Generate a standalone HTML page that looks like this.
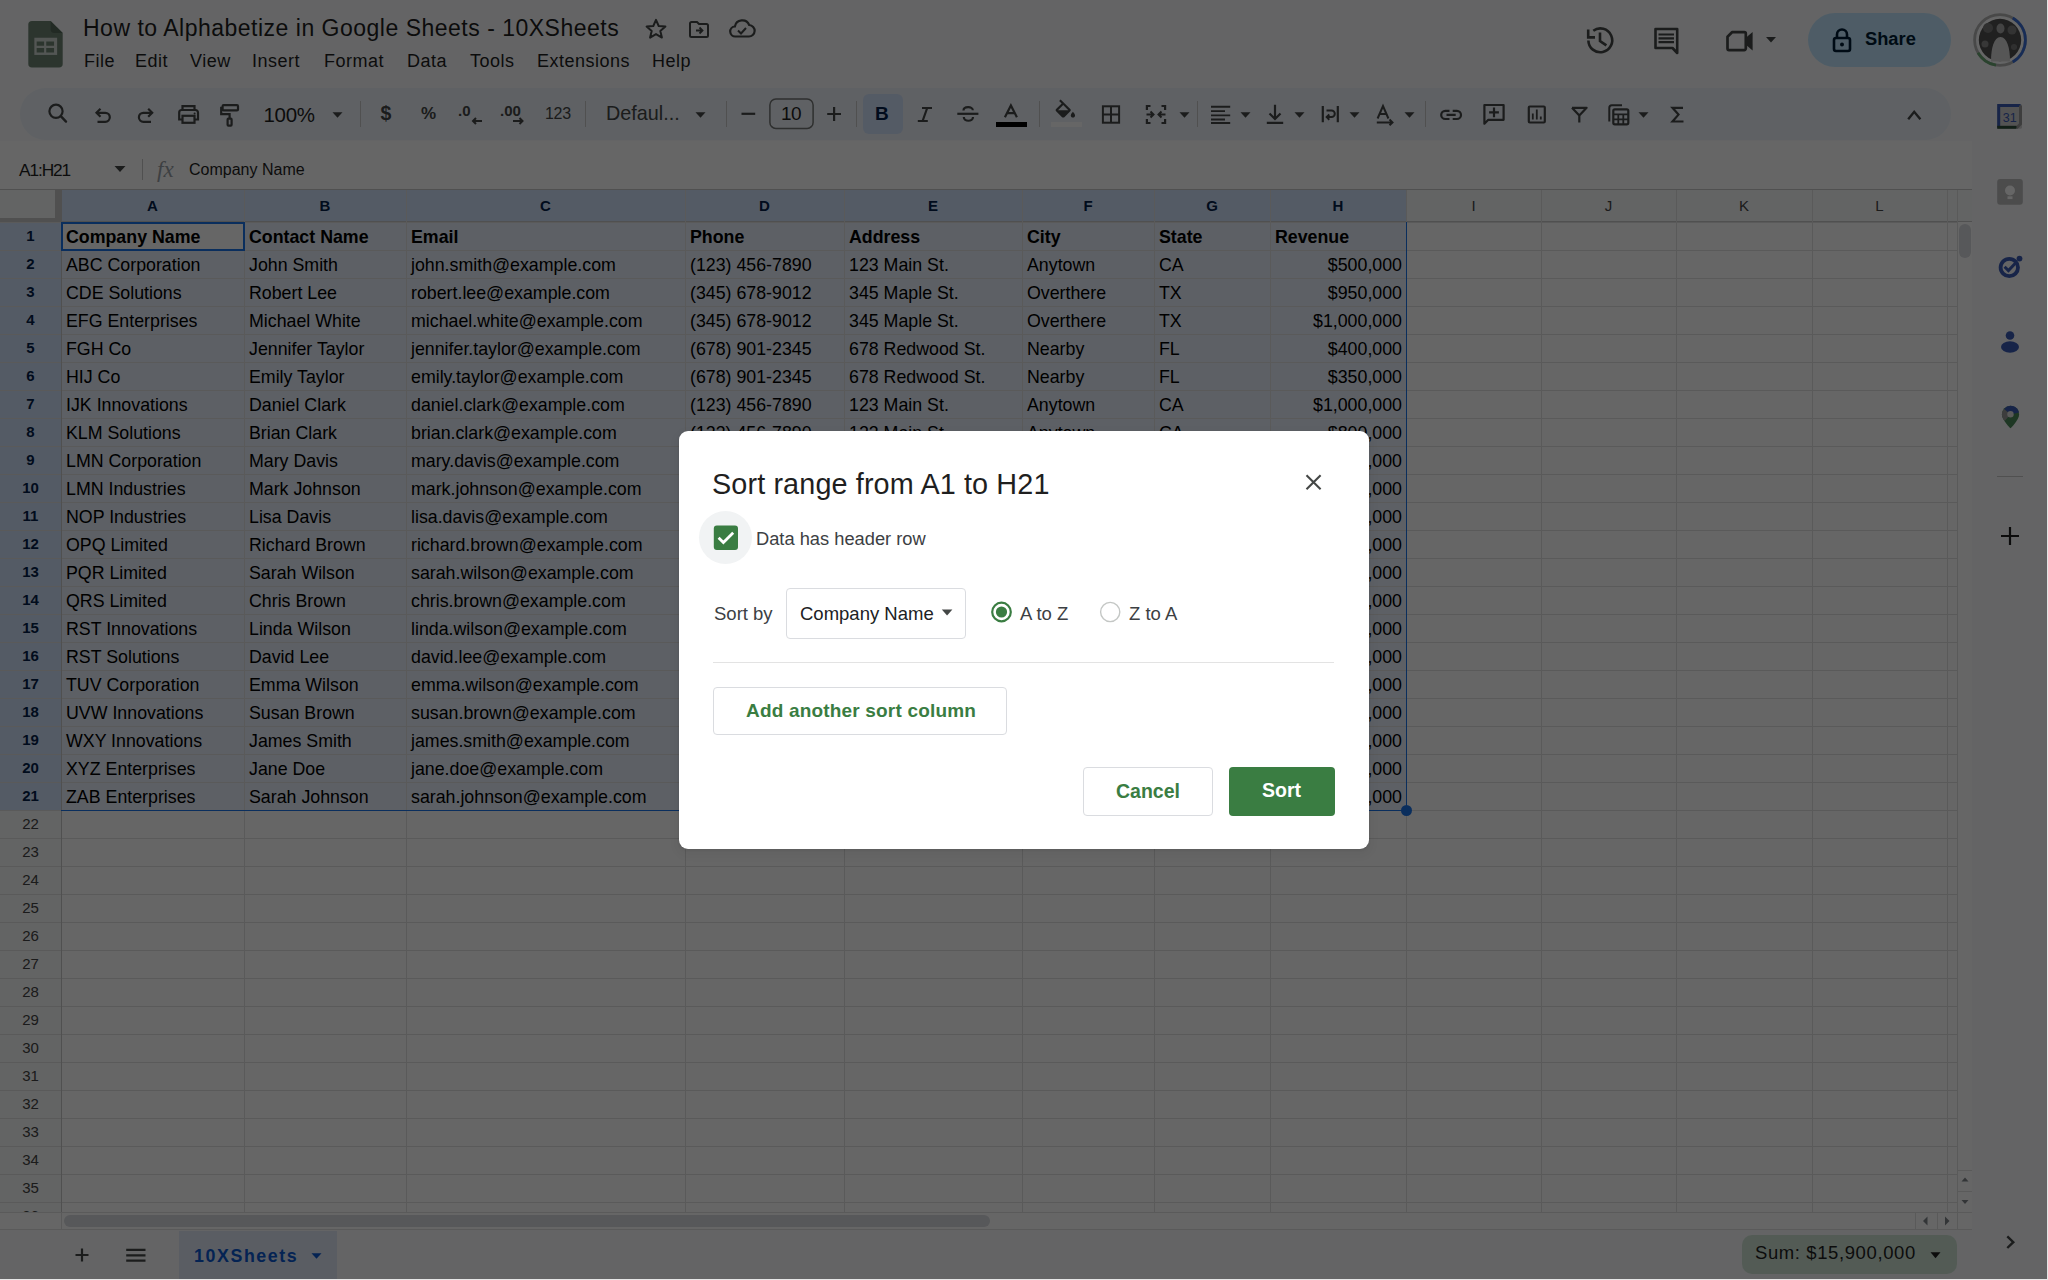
<!DOCTYPE html>
<html><head><meta charset="utf-8"><title>Sheets</title>
<style>
*{box-sizing:border-box}
html,body{margin:0;padding:0}
body{width:2048px;height:1280px;position:relative;overflow:hidden;background:#f9fbfd;font-family:"Liberation Sans",sans-serif;color:#1f1f1f}
.a{position:absolute}
.t{position:absolute;white-space:nowrap;line-height:1}
.cell{position:absolute;white-space:nowrap;font-size:17.8px;line-height:28px;color:#000;overflow:visible}
.rh{position:absolute;left:0;width:61px;text-align:center;font-size:15px;line-height:28px;color:#444}
.ch{position:absolute;text-align:center;font-size:15px;line-height:31px;color:#444;top:190px}
.vl{position:absolute;width:1px;background:#e1e1e1}
.hl{position:absolute;height:1px;background:#e1e1e1}
.ic{position:absolute}
.menu{position:absolute;top:51px;font-size:18px;line-height:20px;letter-spacing:0.5px;color:#1f1f1f}
</style></head><body>

<div class="a" style="left:1972px;top:0;width:76px;height:1280px;background:#f9fbfd"></div>
<svg class="a" style="left:28.3px;top:21px" width="35" height="46.5" viewBox="0 0 37 50">
<path d="M4 0h20l13 13v33a4 4 0 0 1-4 4H4a4 4 0 0 1-4-4V4a4 4 0 0 1 4-4z" fill="#6f8574"/>
<path d="M24 0l13 13H28a4 4 0 0 1-4-4z" fill="#566a5b"/>
<path d="M6.5 18h24.5v18.5H6.5z" fill="#d0d6d2"/>
<path d="M9 22h8v4.6H9zM19.3 22h8.4v4.6h-8.4zM9 29h8v4.8H9zM19.3 29h8.4v4.8h-8.4z" fill="#6f8574"/>
</svg>
<div class="t" style="left:83px;top:17px;font-size:23px;letter-spacing:0.5px;color:#1f1f1f">How to Alphabetize in Google Sheets - 10XSheets</div>
<svg class="a" style="left:644px;top:17px" width="24" height="24" viewBox="0 0 24 24"><path d="M12 2.8l2.7 6.2 6.7.6-5.1 4.4 1.6 6.6L12 17.1l-5.9 3.5 1.6-6.6L2.6 9.6l6.7-.6z" fill="none" stroke="#444746" stroke-width="2" stroke-linejoin="round"/></svg>
<svg class="a" style="left:687px;top:17px" width="24" height="24" viewBox="0 0 24 24"><path d="M3 6.5a1.5 1.5 0 0 1 1.5-1.5H10l2 2h7.5A1.5 1.5 0 0 1 21 8.5v10a1.5 1.5 0 0 1-1.5 1.5h-15A1.5 1.5 0 0 1 3 18.5z" fill="none" stroke="#444746" stroke-width="2"/><path d="M9 13.5h6M12.5 10.5l3 3-3 3" fill="none" stroke="#444746" stroke-width="1.8"/></svg>
<svg class="a" style="left:728px;top:16px" width="28" height="26" viewBox="0 0 28 26"><path d="M7.5 20.5a5 5 0 0 1-.6-10A7.5 7.5 0 0 1 21.2 9a5.6 5.6 0 0 1-.6 11.5z" fill="none" stroke="#444746" stroke-width="2.2"/><path d="M10 14.5l3 3 5-5.5" fill="none" stroke="#444746" stroke-width="2"/></svg>
<div class="menu" style="left:84px">File</div>
<div class="menu" style="left:135px">Edit</div>
<div class="menu" style="left:190px">View</div>
<div class="menu" style="left:252px">Insert</div>
<div class="menu" style="left:324px">Format</div>
<div class="menu" style="left:407px">Data</div>
<div class="menu" style="left:470px">Tools</div>
<div class="menu" style="left:537px">Extensions</div>
<div class="menu" style="left:652px">Help</div>
<svg class="a" style="left:1582px;top:22px" width="36" height="36" viewBox="1582 22 36 36" fill="none" stroke="#444746" stroke-width="2.6"><path d="M1588.4 40.4A11.9 11.9 0 1 0 1593.3 30.7"/><path d="M1588.2 29.6V37.4H1595"/><path d="M1600 32.6V41L1606.4 45.4"/></svg>
<svg class="a" style="left:1650px;top:24px" width="32" height="32" viewBox="1650 24 32 32" fill="none" stroke="#444746" stroke-width="2.6"><path d="M1655.5 29H1677.2V53L1672.5 48H1655.5z" stroke-linejoin="round"/><path d="M1658.5 34.5H1674M1658.5 38.3H1674M1658.5 42.1H1674" stroke-width="2.2"/></svg>
<svg class="a" style="left:1722px;top:26px" width="34" height="30" viewBox="1722 26 34 30"><path d="M1732 32.2H1744.3A1.5 1.5 0 0 1 1745.8 33.7V48.6A1.5 1.5 0 0 1 1744.3 50.1H1729A1.5 1.5 0 0 1 1727.5 48.6V36.7z" fill="none" stroke="#444746" stroke-width="2.7" stroke-linejoin="round"/><path d="M1745 38.5L1752.6 32V50.5L1745 44z" fill="#444746"/></svg>
<svg class="a" style="left:1765px;top:36px" width="12" height="8" viewBox="0 0 12 8"><path d="M1 1h10L6 6.5z" fill="#444746"/></svg>
<div class="a" style="left:1808px;top:13px;width:143px;height:54px;border-radius:27px;background:#c2e7ff"></div>
<svg class="a" style="left:1830px;top:26px" width="24" height="28" viewBox="0 0 24 28"><path d="M7 12V8.5a5 5 0 0 1 10 0V12" fill="none" stroke="#001d35" stroke-width="2.6"/><rect x="4" y="12" width="16" height="13" rx="2" fill="none" stroke="#001d35" stroke-width="2.6"/><circle cx="12" cy="18.5" r="2" fill="#001d35"/></svg>
<div class="t" style="left:1865px;top:30px;font-size:18.3px;font-weight:bold;color:#001d35">Share</div>
<svg class="a" style="left:1970px;top:10px" width="60" height="60" viewBox="1970 10 60 60">
<circle cx="2000" cy="40" r="25.4" fill="none" stroke="#b4b4b4" stroke-width="2.8"/>
<path d="M2012.7 18A25.4 25.4 0 0 1 2012.7 62" fill="none" stroke="#3b6fd8" stroke-width="2.8"/>
<path d="M1978 52.7A25.4 25.4 0 0 0 1996 65.1" fill="none" stroke="#6aa874" stroke-width="2.8"/>
<circle cx="2000" cy="40" r="22.6" fill="#ffffff"/>
<circle cx="2000" cy="40" r="21.2" fill="#505050"/>
<circle cx="1988" cy="28" r="5" fill="#777"/><circle cx="2012" cy="30" r="4.5" fill="#808080"/><circle cx="1985" cy="44" r="3.5" fill="#8a8a8a"/><circle cx="2014" cy="47" r="3" fill="#777"/>
<ellipse cx="2000.5" cy="28.5" rx="4" ry="5" fill="#a8a8a8"/>
<path d="M1991 61.5C1991 48 1994 37 2000.5 37S2010 48 2010 61.5z" fill="#d8d8d8"/>
</svg>
<div class="a" style="left:20px;top:88px;width:1931px;height:52px;border-radius:26px;background:#edf2fa"></div>
<div class="a" style="left:0;top:141px;width:1972px;height:49px;background:#fff"></div>
<div class="t" style="left:19px;top:161.5px;font-size:17.3px;letter-spacing:-1.1px;color:#1f1f1f">A1:H21</div>
<svg class="a" style="left:113px;top:165px" width="14" height="8" viewBox="0 0 14 8"><path d="M1.5 1h11L7 7z" fill="#444746"/></svg>
<div class="a" style="left:142px;top:159px;width:1px;height:21px;background:#c7c7c7"></div>
<div class="t" style="left:157px;top:158px;font-size:23px;font-family:'Liberation Serif',serif;font-style:italic;color:#9aa0a6">fx</div>
<div class="t" style="left:189px;top:162px;font-size:16px;color:#1f1f1f">Company Name</div>
<div class="a" style="left:0;top:190px;width:1972px;height:1022px;background:#fff"></div>
<div class="a" style="left:0;top:190px;width:1972px;height:32px;background:#f8f9fa"></div>
<div class="a" style="left:62px;top:190px;width:1344px;height:32px;background:#d3e3fd"></div>
<div class="a" style="left:0;top:222px;width:61px;height:990px;background:#f8f9fa"></div>
<div class="a" style="left:0;top:222px;width:61px;height:588px;background:#d3e3fd"></div>
<div class="a" style="left:62px;top:222px;width:1344px;height:588px;background:rgba(14,101,235,0.09)"></div>
<div class="a" style="left:62px;top:222px;width:182px;height:28px;background:#fff"></div>
<div class="hl" style="left:0;top:222px;width:1957px"></div>
<div class="hl" style="left:0;top:250px;width:1957px"></div>
<div class="hl" style="left:0;top:278px;width:1957px"></div>
<div class="hl" style="left:0;top:306px;width:1957px"></div>
<div class="hl" style="left:0;top:334px;width:1957px"></div>
<div class="hl" style="left:0;top:362px;width:1957px"></div>
<div class="hl" style="left:0;top:390px;width:1957px"></div>
<div class="hl" style="left:0;top:418px;width:1957px"></div>
<div class="hl" style="left:0;top:446px;width:1957px"></div>
<div class="hl" style="left:0;top:474px;width:1957px"></div>
<div class="hl" style="left:0;top:502px;width:1957px"></div>
<div class="hl" style="left:0;top:530px;width:1957px"></div>
<div class="hl" style="left:0;top:558px;width:1957px"></div>
<div class="hl" style="left:0;top:586px;width:1957px"></div>
<div class="hl" style="left:0;top:614px;width:1957px"></div>
<div class="hl" style="left:0;top:642px;width:1957px"></div>
<div class="hl" style="left:0;top:670px;width:1957px"></div>
<div class="hl" style="left:0;top:698px;width:1957px"></div>
<div class="hl" style="left:0;top:726px;width:1957px"></div>
<div class="hl" style="left:0;top:754px;width:1957px"></div>
<div class="hl" style="left:0;top:782px;width:1957px"></div>
<div class="hl" style="left:0;top:810px;width:1957px"></div>
<div class="hl" style="left:0;top:838px;width:1957px"></div>
<div class="hl" style="left:0;top:866px;width:1957px"></div>
<div class="hl" style="left:0;top:894px;width:1957px"></div>
<div class="hl" style="left:0;top:922px;width:1957px"></div>
<div class="hl" style="left:0;top:950px;width:1957px"></div>
<div class="hl" style="left:0;top:978px;width:1957px"></div>
<div class="hl" style="left:0;top:1006px;width:1957px"></div>
<div class="hl" style="left:0;top:1034px;width:1957px"></div>
<div class="hl" style="left:0;top:1062px;width:1957px"></div>
<div class="hl" style="left:0;top:1090px;width:1957px"></div>
<div class="hl" style="left:0;top:1118px;width:1957px"></div>
<div class="hl" style="left:0;top:1146px;width:1957px"></div>
<div class="hl" style="left:0;top:1174px;width:1957px"></div>
<div class="hl" style="left:0;top:1202px;width:1957px"></div>
<div class="hl" style="left:0;top:189px;width:1972px;background:#c7c7c7"></div>
<div class="hl" style="left:0;top:221px;width:1972px;background:#c7c7c7"></div>
<div class="vl" style="left:61px;top:190px;height:1022px"></div>
<div class="vl" style="left:244px;top:190px;height:1022px"></div>
<div class="vl" style="left:406px;top:190px;height:1022px"></div>
<div class="vl" style="left:685px;top:190px;height:1022px"></div>
<div class="vl" style="left:844px;top:190px;height:1022px"></div>
<div class="vl" style="left:1022px;top:190px;height:1022px"></div>
<div class="vl" style="left:1154px;top:190px;height:1022px"></div>
<div class="vl" style="left:1270px;top:190px;height:1022px"></div>
<div class="vl" style="left:1406px;top:190px;height:1022px"></div>
<div class="vl" style="left:1541px;top:190px;height:1022px"></div>
<div class="vl" style="left:1676px;top:190px;height:1022px"></div>
<div class="vl" style="left:1812px;top:190px;height:1022px"></div>
<div class="vl" style="left:1947px;top:190px;height:1022px"></div>
<div class="vl" style="left:1957px;top:190px;height:1022px"></div>
<div class="vl" style="left:61px;top:190px;height:1040px;background:#c7c7c7"></div>
<div class="a" style="left:0;top:190px;width:55px;height:27.5px;background:#f8f9fa"></div>
<div class="a" style="left:55px;top:190px;width:6.5px;height:32px;background:#c7c7c7"></div>
<div class="a" style="left:0;top:217.5px;width:61px;height:4.5px;background:#c7c7c7"></div>
<div class="ch" style="left:61px;width:183px;font-weight:bold;color:#041e49">A</div>
<div class="ch" style="left:244px;width:162px;font-weight:bold;color:#041e49">B</div>
<div class="ch" style="left:406px;width:279px;font-weight:bold;color:#041e49">C</div>
<div class="ch" style="left:685px;width:159px;font-weight:bold;color:#041e49">D</div>
<div class="ch" style="left:844px;width:178px;font-weight:bold;color:#041e49">E</div>
<div class="ch" style="left:1022px;width:132px;font-weight:bold;color:#041e49">F</div>
<div class="ch" style="left:1154px;width:116px;font-weight:bold;color:#041e49">G</div>
<div class="ch" style="left:1270px;width:136px;font-weight:bold;color:#041e49">H</div>
<div class="ch" style="left:1406px;width:135px;">I</div>
<div class="ch" style="left:1541px;width:135px;">J</div>
<div class="ch" style="left:1676px;width:136px;">K</div>
<div class="ch" style="left:1812px;width:135px;">L</div>
<div class="a" style="left:0;top:222px;width:61px;height:990px;overflow:hidden">
<div class="rh" style="top:0px;font-weight:bold;color:#041e49">1</div>
<div class="rh" style="top:28px;font-weight:bold;color:#041e49">2</div>
<div class="rh" style="top:56px;font-weight:bold;color:#041e49">3</div>
<div class="rh" style="top:84px;font-weight:bold;color:#041e49">4</div>
<div class="rh" style="top:112px;font-weight:bold;color:#041e49">5</div>
<div class="rh" style="top:140px;font-weight:bold;color:#041e49">6</div>
<div class="rh" style="top:168px;font-weight:bold;color:#041e49">7</div>
<div class="rh" style="top:196px;font-weight:bold;color:#041e49">8</div>
<div class="rh" style="top:224px;font-weight:bold;color:#041e49">9</div>
<div class="rh" style="top:252px;font-weight:bold;color:#041e49">10</div>
<div class="rh" style="top:280px;font-weight:bold;color:#041e49">11</div>
<div class="rh" style="top:308px;font-weight:bold;color:#041e49">12</div>
<div class="rh" style="top:336px;font-weight:bold;color:#041e49">13</div>
<div class="rh" style="top:364px;font-weight:bold;color:#041e49">14</div>
<div class="rh" style="top:392px;font-weight:bold;color:#041e49">15</div>
<div class="rh" style="top:420px;font-weight:bold;color:#041e49">16</div>
<div class="rh" style="top:448px;font-weight:bold;color:#041e49">17</div>
<div class="rh" style="top:476px;font-weight:bold;color:#041e49">18</div>
<div class="rh" style="top:504px;font-weight:bold;color:#041e49">19</div>
<div class="rh" style="top:532px;font-weight:bold;color:#041e49">20</div>
<div class="rh" style="top:560px;font-weight:bold;color:#041e49">21</div>
<div class="rh" style="top:588px;">22</div>
<div class="rh" style="top:616px;">23</div>
<div class="rh" style="top:644px;">24</div>
<div class="rh" style="top:672px;">25</div>
<div class="rh" style="top:700px;">26</div>
<div class="rh" style="top:728px;">27</div>
<div class="rh" style="top:756px;">28</div>
<div class="rh" style="top:784px;">29</div>
<div class="rh" style="top:812px;">30</div>
<div class="rh" style="top:840px;">31</div>
<div class="rh" style="top:868px;">32</div>
<div class="rh" style="top:896px;">33</div>
<div class="rh" style="top:924px;">34</div>
<div class="rh" style="top:952px;">35</div>
<div class="rh" style="top:980px;">36</div>
</div>
<div class="cell" style="top:223px;left:66px;font-weight:bold;">Company Name</div>
<div class="cell" style="top:223px;left:249px;font-weight:bold;">Contact Name</div>
<div class="cell" style="top:223px;left:411px;font-weight:bold;">Email</div>
<div class="cell" style="top:223px;left:690px;font-weight:bold;">Phone</div>
<div class="cell" style="top:223px;left:849px;font-weight:bold;">Address</div>
<div class="cell" style="top:223px;left:1027px;font-weight:bold;">City</div>
<div class="cell" style="top:223px;left:1159px;font-weight:bold;">State</div>
<div class="cell" style="top:223px;left:1275px;font-weight:bold;">Revenue</div>
<div class="cell" style="top:251px;left:66px;">ABC Corporation</div>
<div class="cell" style="top:251px;left:249px;">John Smith</div>
<div class="cell" style="top:251px;left:411px;">john.smith@example.com</div>
<div class="cell" style="top:251px;left:690px;">(123) 456-7890</div>
<div class="cell" style="top:251px;left:849px;">123 Main St.</div>
<div class="cell" style="top:251px;left:1027px;">Anytown</div>
<div class="cell" style="top:251px;left:1159px;">CA</div>
<div class="cell" style="top:251px;left:1270px;width:132px;text-align:right;">$500,000</div>
<div class="cell" style="top:279px;left:66px;">CDE Solutions</div>
<div class="cell" style="top:279px;left:249px;">Robert Lee</div>
<div class="cell" style="top:279px;left:411px;">robert.lee@example.com</div>
<div class="cell" style="top:279px;left:690px;">(345) 678-9012</div>
<div class="cell" style="top:279px;left:849px;">345 Maple St.</div>
<div class="cell" style="top:279px;left:1027px;">Overthere</div>
<div class="cell" style="top:279px;left:1159px;">TX</div>
<div class="cell" style="top:279px;left:1270px;width:132px;text-align:right;">$950,000</div>
<div class="cell" style="top:307px;left:66px;">EFG Enterprises</div>
<div class="cell" style="top:307px;left:249px;">Michael White</div>
<div class="cell" style="top:307px;left:411px;">michael.white@example.com</div>
<div class="cell" style="top:307px;left:690px;">(345) 678-9012</div>
<div class="cell" style="top:307px;left:849px;">345 Maple St.</div>
<div class="cell" style="top:307px;left:1027px;">Overthere</div>
<div class="cell" style="top:307px;left:1159px;">TX</div>
<div class="cell" style="top:307px;left:1270px;width:132px;text-align:right;">$1,000,000</div>
<div class="cell" style="top:335px;left:66px;">FGH Co</div>
<div class="cell" style="top:335px;left:249px;">Jennifer Taylor</div>
<div class="cell" style="top:335px;left:411px;">jennifer.taylor@example.com</div>
<div class="cell" style="top:335px;left:690px;">(678) 901-2345</div>
<div class="cell" style="top:335px;left:849px;">678 Redwood St.</div>
<div class="cell" style="top:335px;left:1027px;">Nearby</div>
<div class="cell" style="top:335px;left:1159px;">FL</div>
<div class="cell" style="top:335px;left:1270px;width:132px;text-align:right;">$400,000</div>
<div class="cell" style="top:363px;left:66px;">HIJ Co</div>
<div class="cell" style="top:363px;left:249px;">Emily Taylor</div>
<div class="cell" style="top:363px;left:411px;">emily.taylor@example.com</div>
<div class="cell" style="top:363px;left:690px;">(678) 901-2345</div>
<div class="cell" style="top:363px;left:849px;">678 Redwood St.</div>
<div class="cell" style="top:363px;left:1027px;">Nearby</div>
<div class="cell" style="top:363px;left:1159px;">FL</div>
<div class="cell" style="top:363px;left:1270px;width:132px;text-align:right;">$350,000</div>
<div class="cell" style="top:391px;left:66px;">IJK Innovations</div>
<div class="cell" style="top:391px;left:249px;">Daniel Clark</div>
<div class="cell" style="top:391px;left:411px;">daniel.clark@example.com</div>
<div class="cell" style="top:391px;left:690px;">(123) 456-7890</div>
<div class="cell" style="top:391px;left:849px;">123 Main St.</div>
<div class="cell" style="top:391px;left:1027px;">Anytown</div>
<div class="cell" style="top:391px;left:1159px;">CA</div>
<div class="cell" style="top:391px;left:1270px;width:132px;text-align:right;">$1,000,000</div>
<div class="cell" style="top:419px;left:66px;">KLM Solutions</div>
<div class="cell" style="top:419px;left:249px;">Brian Clark</div>
<div class="cell" style="top:419px;left:411px;">brian.clark@example.com</div>
<div class="cell" style="top:419px;left:690px;">(123) 456-7890</div>
<div class="cell" style="top:419px;left:849px;">123 Main St.</div>
<div class="cell" style="top:419px;left:1027px;">Anytown</div>
<div class="cell" style="top:419px;left:1159px;">CA</div>
<div class="cell" style="top:419px;left:1270px;width:132px;text-align:right;">$800,000</div>
<div class="cell" style="top:447px;left:66px;">LMN Corporation</div>
<div class="cell" style="top:447px;left:249px;">Mary Davis</div>
<div class="cell" style="top:447px;left:411px;">mary.davis@example.com</div>
<div class="cell" style="top:447px;left:690px;">(234) 567-8901</div>
<div class="cell" style="top:447px;left:849px;">234 Oak St.</div>
<div class="cell" style="top:447px;left:1027px;">Somewhere</div>
<div class="cell" style="top:447px;left:1159px;">NY</div>
<div class="cell" style="top:447px;left:1270px;width:132px;text-align:right;">$700,000</div>
<div class="cell" style="top:475px;left:66px;">LMN Industries</div>
<div class="cell" style="top:475px;left:249px;">Mark Johnson</div>
<div class="cell" style="top:475px;left:411px;">mark.johnson@example.com</div>
<div class="cell" style="top:475px;left:690px;">(234) 567-8901</div>
<div class="cell" style="top:475px;left:849px;">234 Oak St.</div>
<div class="cell" style="top:475px;left:1027px;">Somewhere</div>
<div class="cell" style="top:475px;left:1159px;">NY</div>
<div class="cell" style="top:475px;left:1270px;width:132px;text-align:right;">$600,000</div>
<div class="cell" style="top:503px;left:66px;">NOP Industries</div>
<div class="cell" style="top:503px;left:249px;">Lisa Davis</div>
<div class="cell" style="top:503px;left:411px;">lisa.davis@example.com</div>
<div class="cell" style="top:503px;left:690px;">(456) 789-0123</div>
<div class="cell" style="top:503px;left:849px;">456 Pine St.</div>
<div class="cell" style="top:503px;left:1027px;">Elsewhere</div>
<div class="cell" style="top:503px;left:1159px;">WA</div>
<div class="cell" style="top:503px;left:1270px;width:132px;text-align:right;">$900,000</div>
<div class="cell" style="top:531px;left:66px;">OPQ Limited</div>
<div class="cell" style="top:531px;left:249px;">Richard Brown</div>
<div class="cell" style="top:531px;left:411px;">richard.brown@example.com</div>
<div class="cell" style="top:531px;left:690px;">(456) 789-0123</div>
<div class="cell" style="top:531px;left:849px;">456 Pine St.</div>
<div class="cell" style="top:531px;left:1027px;">Elsewhere</div>
<div class="cell" style="top:531px;left:1159px;">WA</div>
<div class="cell" style="top:531px;left:1270px;width:132px;text-align:right;">$800,000</div>
<div class="cell" style="top:559px;left:66px;">PQR Limited</div>
<div class="cell" style="top:559px;left:249px;">Sarah Wilson</div>
<div class="cell" style="top:559px;left:411px;">sarah.wilson@example.com</div>
<div class="cell" style="top:559px;left:690px;">(567) 890-1234</div>
<div class="cell" style="top:559px;left:849px;">567 Elm St.</div>
<div class="cell" style="top:559px;left:1027px;">Nowhere</div>
<div class="cell" style="top:559px;left:1159px;">IL</div>
<div class="cell" style="top:559px;left:1270px;width:132px;text-align:right;">$750,000</div>
<div class="cell" style="top:587px;left:66px;">QRS Limited</div>
<div class="cell" style="top:587px;left:249px;">Chris Brown</div>
<div class="cell" style="top:587px;left:411px;">chris.brown@example.com</div>
<div class="cell" style="top:587px;left:690px;">(567) 890-1234</div>
<div class="cell" style="top:587px;left:849px;">567 Elm St.</div>
<div class="cell" style="top:587px;left:1027px;">Nowhere</div>
<div class="cell" style="top:587px;left:1159px;">IL</div>
<div class="cell" style="top:587px;left:1270px;width:132px;text-align:right;">$650,000</div>
<div class="cell" style="top:615px;left:66px;">RST Innovations</div>
<div class="cell" style="top:615px;left:249px;">Linda Wilson</div>
<div class="cell" style="top:615px;left:411px;">linda.wilson@example.com</div>
<div class="cell" style="top:615px;left:690px;">(789) 012-3456</div>
<div class="cell" style="top:615px;left:849px;">789 Cedar St.</div>
<div class="cell" style="top:615px;left:1027px;">Someplace</div>
<div class="cell" style="top:615px;left:1159px;">GA</div>
<div class="cell" style="top:615px;left:1270px;width:132px;text-align:right;">$550,000</div>
<div class="cell" style="top:643px;left:66px;">RST Solutions</div>
<div class="cell" style="top:643px;left:249px;">David Lee</div>
<div class="cell" style="top:643px;left:411px;">david.lee@example.com</div>
<div class="cell" style="top:643px;left:690px;">(789) 012-3456</div>
<div class="cell" style="top:643px;left:849px;">789 Cedar St.</div>
<div class="cell" style="top:643px;left:1027px;">Someplace</div>
<div class="cell" style="top:643px;left:1159px;">GA</div>
<div class="cell" style="top:643px;left:1270px;width:132px;text-align:right;">$850,000</div>
<div class="cell" style="top:671px;left:66px;">TUV Corporation</div>
<div class="cell" style="top:671px;left:249px;">Emma Wilson</div>
<div class="cell" style="top:671px;left:411px;">emma.wilson@example.com</div>
<div class="cell" style="top:671px;left:690px;">(890) 123-4567</div>
<div class="cell" style="top:671px;left:849px;">890 Birch St.</div>
<div class="cell" style="top:671px;left:1027px;">Anyplace</div>
<div class="cell" style="top:671px;left:1159px;">OH</div>
<div class="cell" style="top:671px;left:1270px;width:132px;text-align:right;">$950,000</div>
<div class="cell" style="top:699px;left:66px;">UVW Innovations</div>
<div class="cell" style="top:699px;left:249px;">Susan Brown</div>
<div class="cell" style="top:699px;left:411px;">susan.brown@example.com</div>
<div class="cell" style="top:699px;left:690px;">(890) 123-4567</div>
<div class="cell" style="top:699px;left:849px;">890 Birch St.</div>
<div class="cell" style="top:699px;left:1027px;">Anyplace</div>
<div class="cell" style="top:699px;left:1159px;">OH</div>
<div class="cell" style="top:699px;left:1270px;width:132px;text-align:right;">$400,000</div>
<div class="cell" style="top:727px;left:66px;">WXY Innovations</div>
<div class="cell" style="top:727px;left:249px;">James Smith</div>
<div class="cell" style="top:727px;left:411px;">james.smith@example.com</div>
<div class="cell" style="top:727px;left:690px;">(901) 234-5678</div>
<div class="cell" style="top:727px;left:849px;">901 Spruce St.</div>
<div class="cell" style="top:727px;left:1027px;">Everywhere</div>
<div class="cell" style="top:727px;left:1159px;">MI</div>
<div class="cell" style="top:727px;left:1270px;width:132px;text-align:right;">$300,000</div>
<div class="cell" style="top:755px;left:66px;">XYZ Enterprises</div>
<div class="cell" style="top:755px;left:249px;">Jane Doe</div>
<div class="cell" style="top:755px;left:411px;">jane.doe@example.com</div>
<div class="cell" style="top:755px;left:690px;">(901) 234-5678</div>
<div class="cell" style="top:755px;left:849px;">901 Spruce St.</div>
<div class="cell" style="top:755px;left:1027px;">Everywhere</div>
<div class="cell" style="top:755px;left:1159px;">MI</div>
<div class="cell" style="top:755px;left:1270px;width:132px;text-align:right;">$500,000</div>
<div class="cell" style="top:783px;left:66px;">ZAB Enterprises</div>
<div class="cell" style="top:783px;left:249px;">Sarah Johnson</div>
<div class="cell" style="top:783px;left:411px;">sarah.johnson@example.com</div>
<div class="cell" style="top:783px;left:690px;">(012) 345-6789</div>
<div class="cell" style="top:783px;left:849px;">012 Willow St.</div>
<div class="cell" style="top:783px;left:1027px;">Anywhere</div>
<div class="cell" style="top:783px;left:1159px;">CO</div>
<div class="cell" style="top:783px;left:1270px;width:132px;text-align:right;">$450,000</div>
<div class="a" style="left:61px;top:222px;width:1346px;height:589px;border:1px solid #1a73e8;border-top:none;border-left:none"></div>
<div class="a" style="left:61px;top:222px;width:184px;height:29px;border:2px solid #1a73e8"></div>
<div class="a" style="left:1401px;top:805.3px;width:11px;height:11px;border-radius:50%;background:#1a73e8"></div>
<div class="a" style="left:1959px;top:224px;width:12px;height:34px;border-radius:6px;background:#dadce0"></div>
<div class="hl" style="left:1957px;top:1170px;width:15px"></div>
<div class="hl" style="left:1957px;top:1191px;width:15px"></div>
<div class="a" style="left:1958px;top:1171px;width:14px;height:41px;background:#fff"></div>
<div class="hl" style="left:1957px;top:1191px;width:15px"></div>
<svg class="a" style="left:1960px;top:1176px" width="10" height="30" viewBox="0 0 10 30"><path d="M1.5 5.5h7L5 1.5z" fill="#80868b"/><path d="M1.5 24h7L5 28z" fill="#80868b"/></svg>
<div class="a" style="left:0;top:1212px;width:1972px;height:18px;background:#fff;border-top:1px solid #e1e1e1;border-bottom:1px solid #e1e1e1"></div>
<div class="vl" style="left:61px;top:1212px;height:18px;background:#e1e1e1"></div>
<div class="a" style="left:64px;top:1214.5px;width:926px;height:12px;border-radius:6px;background:#dadce0"></div>
<div class="vl" style="left:1915px;top:1212px;height:18px"></div>
<div class="vl" style="left:1937px;top:1212px;height:18px"></div>
<div class="vl" style="left:1957px;top:1212px;height:18px"></div>
<svg class="a" style="left:1920px;top:1215px" width="32" height="12" viewBox="0 0 32 12"><path d="M7.5 1.5v9L3 6z" fill="#80868b"/><path d="M25 1.5v9L29.5 6z" fill="#80868b"/></svg>
<div class="a" style="left:0;top:1230px;width:1972px;height:50px;background:#f9fbfd"></div>
<svg class="a" style="left:74px;top:1247px" width="16" height="16" viewBox="0 0 16 16"><path d="M8 1.5v13M1.5 8h13" stroke="#444746" stroke-width="2.2"/></svg>
<svg class="a" style="left:125px;top:1247px" width="22" height="16" viewBox="0 0 22 16"><path d="M1.2 2.8h19.3M1.2 8.4h19.3M1.2 13.7h19.3" stroke="#444746" stroke-width="2.2"/></svg>
<div class="a" style="left:179px;top:1231px;width:158px;height:49px;background:#e1e9f7"></div>
<div class="t" style="left:194px;top:1247.5px;font-size:17.8px;font-weight:bold;letter-spacing:1.6px;color:#0b57d0">10XSheets</div>
<svg class="a" style="left:311px;top:1253px" width="11" height="6" viewBox="0 0 11 6"><path d="M0.5 0.3h10L5.5 5.8z" fill="#0b57d0"/></svg>
<div class="a" style="left:1742px;top:1234.5px;width:215px;height:39px;border-radius:10px;background:#d0e4d5"></div>
<div class="t" style="left:1755px;top:1243.5px;font-size:18.5px;letter-spacing:0.6px;color:#1f1f1f">Sum: $15,900,000</div>
<svg class="a" style="left:1930px;top:1251.5px" width="11" height="7" viewBox="0 0 11 7"><path d="M0.5 0.3h10L5.5 6.3z" fill="#1f1f1f"/></svg>
<svg class="a" style="left:2003px;top:1234px" width="14" height="16" viewBox="0 0 14 16"><path d="M4.3 2.4l6 5.8-6 5.8" fill="none" stroke="#444746" stroke-width="2.4"/></svg>
<svg class="a" style="left:1996px;top:103px" width="28" height="28" viewBox="1996 103 28 28"><rect x="1997.2" y="104" width="24.7" height="24.7" rx="1.5" fill="#cfcfcf"/><path d="M1998.7 127.5V105.5H2020.5" fill="none" stroke="#3b5bb5" stroke-width="3"/><path d="M2020.5 105.5V124L2016.5 128" fill="none" stroke="#9a9a9a" stroke-width="3"/><path d="M1997.2 127.3H2016.5" stroke="#2f4f3a" stroke-width="3"/><text x="2009.8" y="122" font-size="12.5" text-anchor="middle" fill="#3b5bb5" font-family="Liberation Sans">31</text></svg>
<svg class="a" style="left:1997px;top:179px" width="26" height="26" viewBox="0 0 26 26"><rect x="0.2" y="0" width="25.6" height="25.8" rx="3" fill="#bdbdbd"/><circle cx="13" cy="11.5" r="5" fill="#fff"/><rect x="10.5" y="17.3" width="5" height="2.8" fill="#fff"/></svg>
<svg class="a" style="left:1997px;top:254px" width="27" height="25" viewBox="0 0 27 25"><circle cx="12.3" cy="13.5" r="8.7" fill="none" stroke="#3b5bb5" stroke-width="3.8"/><path d="M7.6 12.8l3.8 3.8 7.2-7.6" fill="none" stroke="#3b5bb5" stroke-width="3"/><circle cx="22.5" cy="4.6" r="2.9" fill="#3b5bb5"/></svg>
<svg class="a" style="left:2000px;top:330px" width="20" height="24" viewBox="0 0 20 24"><circle cx="10" cy="5.5" r="4.3" fill="#3b5bb5"/><ellipse cx="10" cy="17" rx="9" ry="5.8" fill="#3b5bb5"/></svg>
<svg class="a" style="left:2001px;top:405px" width="19" height="24" viewBox="0 0 19 24"><path d="M9.5 0.8a8.6 8.6 0 0 1 8.6 8.6c0 5.5-8.6 13.8-8.6 13.8S0.9 14.9 0.9 9.4A8.6 8.6 0 0 1 9.5 0.8z" fill="#4c8a5a"/><path d="M3 4a8.6 8.6 0 0 1 15 3.5L9.5 9.4z" fill="#3b5bb5"/><path d="M0.9 9.4A8.6 8.6 0 0 1 3 4l6.5 5.4L3.5 16C2 13.5 0.9 11.5 0.9 9.4z" fill="#9a9a9a"/><circle cx="9.5" cy="9.2" r="3.2" fill="#e0e0e0"/></svg>
<div class="a" style="left:1997px;top:476px;width:26px;height:1px;background:#c7c7c7"></div>
<svg class="a" style="left:2000px;top:526px" width="20" height="20" viewBox="0 0 20 20"><path d="M10 1v18M1 10h18" stroke="#1f1f1f" stroke-width="2.2"/></svg>
<svg class="a" style="left:0;top:88px" width="1972" height="52" viewBox="0 88 1972 52" fill="none" stroke="#444746" stroke-width="2.2">
<circle cx="56" cy="111.3" r="6.6"/><path d="M60.8 116.2L66 121.6" stroke-linecap="round" stroke-width="2.4"/>
<path d="M100.5 108.8L96.5 112.8L100.5 116.8"/><path d="M96.5 112.8H105.3A4.5 4.5 0 0 1 105.3 121.8H97.5"/>
<path d="M148.2 108.8L152.2 112.8L148.2 116.8"/><path d="M152.2 112.8H143.4A4.5 4.5 0 0 0 143.4 121.8H151"/>
<path d="M182.5 110V106.2H194.5V110"/><path d="M182 119.5H179.2V112.5A2.5 2.5 0 0 1 181.7 110H195.5A2.5 2.5 0 0 1 198 112.5V119.5H195"/><rect x="182.5" y="115.8" width="12" height="7" fill="none"/><circle cx="194.6" cy="113.4" r="1" fill="#444746" stroke="none"/>
<rect x="222.6" y="105.2" width="15.4" height="5.2" rx="1"/><path d="M222.6 107.8H221.2V114.2H229.6V118.4"/><rect x="227.6" y="118.6" width="4" height="7" rx="0.8"/>
</svg>
<div class="t" style="left:263.5px;top:104.5px;font-size:20.5px;color:#1f1f1f;letter-spacing:-0.3px">100%</div>
<svg class="a" style="left:331.5px;top:111.5px" width="11" height="6" viewBox="0 0 11 6"><path d="M0.5 0.3h10L5.5 5.8z" fill="#444746"/></svg>
<div class="a" style="left:360px;top:101px;width:1px;height:26px;background:#c7c7c7"></div>
<div class="a" style="left:585px;top:101px;width:1px;height:26px;background:#c7c7c7"></div>
<div class="a" style="left:726px;top:101px;width:1px;height:26px;background:#c7c7c7"></div>
<div class="a" style="left:856px;top:101px;width:1px;height:26px;background:#c7c7c7"></div>
<div class="a" style="left:1039px;top:101px;width:1px;height:26px;background:#c7c7c7"></div>
<div class="a" style="left:1197px;top:101px;width:1px;height:26px;background:#c7c7c7"></div>
<div class="a" style="left:1425px;top:101px;width:1px;height:26px;background:#c7c7c7"></div>
<div class="t" style="left:380.5px;top:103.5px;font-size:19.5px;font-weight:bold;color:#444746">$</div>
<div class="t" style="left:421px;top:105px;font-size:17px;font-weight:bold;color:#444746">%</div>
<div class="t" style="left:458px;top:103px;font-size:15px;font-weight:bold;color:#444746">.0</div>
<div class="t" style="left:500px;top:103px;font-size:15px;font-weight:bold;color:#444746">.00</div>
<svg class="a" style="left:460px;top:115px" width="70" height="12" viewBox="460 115 70 12" fill="none" stroke="#444746" stroke-width="2"><path d="M482 121H473M476 118L473 121L476 124"/><path d="M513 121H522.5M519.5 118L522.5 121L519.5 124"/></svg>
<div class="t" style="left:545px;top:106px;font-size:16px;color:#444746;letter-spacing:-0.3px">123</div>
<div class="t" style="left:606px;top:103.5px;font-size:19.8px;color:#444746">Defaul...</div>
<svg class="a" style="left:695.2px;top:112px" width="11" height="6" viewBox="0 0 11 6"><path d="M0.5 0.3h10L5.5 5.8z" fill="#444746"/></svg>
<svg class="a" style="left:735px;top:95px" width="115" height="38" viewBox="735 95 115 38" fill="none" stroke="#444746" stroke-width="2.2"><path d="M741.5 113.8H755.2"/><rect x="769.9" y="99" width="43.2" height="29.4" rx="6" stroke="#747775" stroke-width="1.5"/><path d="M827.2 114H841M834.1 107V121"/></svg>
<div class="t" style="left:781px;top:104px;font-size:19px;color:#1f1f1f;letter-spacing:-0.5px">10</div>
<div class="a" style="left:863px;top:94px;width:40px;height:40px;border-radius:6px;background:#d3e3fd"></div>
<div class="t" style="left:875px;top:104px;font-size:19px;font-weight:bold;color:#041e49">B</div>
<svg class="a" style="left:910px;top:95px" width="140" height="38" viewBox="910 95 140 38" fill="none" stroke="#444746" stroke-width="2.2">
<path d="M922 108H932M917.8 121H927.8M927.2 108L922.6 121"/>
<path d="M957.3 113.8H978.4"/><path d="M963.5 110.5C963.5 106.2 972.8 106 972.8 110.2"/><path d="M963.8 117C963.8 122 973 122 973 117"/>
<path d="M1004.9 117.3L1010.9 105.5L1016.9 117.3M1007 113.2H1014.8"/>
</svg>
<div class="a" style="left:996px;top:121.5px;width:31px;height:5.5px;background:#000"></div>
<svg class="a" style="left:1050px;top:95px" width="35" height="30" viewBox="1050 95 35 30"><g transform="translate(1052.4 99.6) scale(1.08 1.06)"><path d="M16.56 8.94L7.62 0 6.21 1.41l2.38 2.38-5.15 5.15c-.59.59-.59 1.54 0 2.12l5.5 5.5c.29.29.68.44 1.06.44s.77-.15 1.06-.44l5.5-5.5c.59-.58.59-1.53 0-2.12zM5.21 10L10 5.21 14.79 10H5.21zM19 11.5s-2 2.17-2 3.5c0 1.1.9 2 2 2s2-.9 2-2c0-1.33-2-3.5-2-3.5z" fill="#444746"/></g></svg>
<div class="a" style="left:1051px;top:122px;width:31px;height:4.5px;background:#fff"></div>
<svg class="a" style="left:1095px;top:98px" width="600" height="32" viewBox="1095 98 600 32" fill="none" stroke="#444746" stroke-width="2.2">
<rect x="1102.9" y="106.3" width="16.2" height="16.4" stroke-width="2"/><path d="M1111 106.3V122.7M1102.9 114.5H1119.1" stroke-width="2"/>
<path d="M1150.5 106H1146.9V110M1146.9 119V123H1150.5M1161.5 106H1165.1V110M1165.1 119V123H1161.5"/><path d="M1146.5 114.5H1153.5M1150.5 111.5L1153.5 114.5L1150.5 117.5M1165.5 114.5H1158.5M1161.5 111.5L1158.5 114.5L1161.5 117.5" stroke-width="2"/>
<path d="M1211 106.8H1230.2M1211 111.1H1225M1211 115.4H1230.2M1211 119.5H1225M1211 123H1230.2" stroke-width="1.9"/>
<path d="M1275 104.8V118.5M1269.5 113.5L1275 119L1280.5 113.5M1266.8 122.9H1283.2"/>
<path d="M1322.8 106V122.3M1337.8 106V122.3"/><path d="M1326.5 110.5H1331.5A3.3 3.3 0 0 1 1331.5 117.1H1327M1329.3 114.5L1326.7 117.1L1329.3 119.7" stroke-width="2"/>
<path d="M1377.6 118.5L1383 106L1388.4 118.5M1379.6 114H1386.4" stroke-width="2"/><path d="M1376.8 122.4H1392.5M1389.5 119.5L1392.5 122.4L1389.5 125.3" stroke-width="2"/>
<path d="M1449.5 110.8H1445.3A4.1 4.1 0 0 0 1445.3 119H1449.5M1452.7 110.8H1456.9A4.1 4.1 0 0 1 1456.9 119H1452.7M1446.5 114.9H1455.7"/>
<path d="M1484.4 105H1503.6V119.8H1488.3L1484.4 123.7z" stroke-linejoin="round"/><path d="M1494 107.5V117.3M1489.1 112.4H1498.9"/>
<rect x="1528.8" y="106.5" width="16" height="16" rx="1"/><path d="M1532.8 113.5V119.5M1536.8 109.5V119.5M1540.8 116.5V119.5" stroke-width="1.8"/>
<path d="M1572 107.8H1586.6L1579.3 115.6V122.5M1579.3 115.6L1572 107.8" stroke-linejoin="round"/>
<path d="M1609.3 121.6V107.8A2.5 2.5 0 0 1 1611.8 105.3H1622" stroke-width="2"/><rect x="1613.3" y="109.3" width="15" height="15" rx="1.5"/><path d="M1613.3 114.3H1628.3M1613.3 119.3H1628.3M1618.3 114.3V124.3M1623.3 114.3V124.3" stroke-width="1.8"/>
<path d="M1683 107.8H1672.5L1678.5 114.6L1672.5 121.5H1683.5" stroke-width="2.2"/>
</svg>
<svg class="a" style="left:1179px;top:112px" width="11" height="6" viewBox="0 0 11 6"><path d="M0.5 0.3h10L5.5 5.8z" fill="#444746"/></svg>
<svg class="a" style="left:1239.5px;top:112px" width="11" height="6" viewBox="0 0 11 6"><path d="M0.5 0.3h10L5.5 5.8z" fill="#444746"/></svg>
<svg class="a" style="left:1294px;top:112px" width="11" height="6" viewBox="0 0 11 6"><path d="M0.5 0.3h10L5.5 5.8z" fill="#444746"/></svg>
<svg class="a" style="left:1349px;top:112px" width="11" height="6" viewBox="0 0 11 6"><path d="M0.5 0.3h10L5.5 5.8z" fill="#444746"/></svg>
<svg class="a" style="left:1404px;top:112px" width="11" height="6" viewBox="0 0 11 6"><path d="M0.5 0.3h10L5.5 5.8z" fill="#444746"/></svg>
<svg class="a" style="left:1638.3px;top:112px" width="11" height="6" viewBox="0 0 11 6"><path d="M0.5 0.3h10L5.5 5.8z" fill="#444746"/></svg>
<svg class="a" style="left:1905px;top:108px" width="20" height="14" viewBox="1905 108 20 14" fill="none" stroke="#444746" stroke-width="2.4"><path d="M1908.2 119.2L1914.2 111.8L1920.4 119.2"/></svg>
<div class="a" style="left:0;top:0;width:2048px;height:1280px;background:rgba(0,0,0,0.6)"></div>
<div class="a" style="left:679px;top:431px;width:689.5px;height:418px;border-radius:9px;background:#fff;box-shadow:0 1px 3px rgba(0,0,0,.08),0 4px 8px 3px rgba(0,0,0,.04)"></div>
<div class="t" style="left:712px;top:470px;font-size:28.8px;letter-spacing:0.12px;color:#1f1f1f">Sort range from A1 to H21</div>
<svg class="a" style="left:1303px;top:472px" width="21" height="20" viewBox="1303 472 21 20" fill="none" stroke="#444746" stroke-width="2.1"><path d="M1306.5 475.3L1320.6 489.2M1320.6 475.3L1306.5 489.2"/></svg>
<div class="a" style="left:699px;top:510.5px;width:53px;height:53px;border-radius:50%;background:#f1f3f4"></div>
<svg class="a" style="left:713px;top:524.5px" width="26" height="26" viewBox="0 0 26 26"><rect x="0.8" y="0.5" width="24.2" height="24.4" rx="3" fill="#3a7d42"/><path d="M5.6 12.8L10.4 17.6L20.2 7.8" fill="none" stroke="#fff" stroke-width="2.8"/></svg>
<div class="t" style="left:756px;top:529.5px;font-size:18.3px;color:#3c4043">Data has header row</div>
<div class="t" style="left:714px;top:604.5px;font-size:18.5px;color:#3c4043">Sort by</div>
<div class="a" style="left:786px;top:588px;width:179.5px;height:50.5px;border:1.3px solid #dadce0;border-radius:4px"></div>
<div class="t" style="left:800px;top:604.5px;font-size:18.5px;color:#202124">Company Name</div>
<svg class="a" style="left:941px;top:609px" width="12" height="7" viewBox="0 0 12 7"><path d="M0.8 0.6h10.6L6.1 6.4z" fill="#444746"/></svg>
<svg class="a" style="left:988px;top:598px" width="30" height="30" viewBox="988 598 30 30"><circle cx="1001.5" cy="612" r="9.3" fill="none" stroke="#3a7d42" stroke-width="2.2"/><circle cx="1001.5" cy="612" r="5.6" fill="#3a7d42"/></svg>
<div class="t" style="left:1020px;top:604.5px;font-size:18.5px;color:#3c4043">A to Z</div>
<svg class="a" style="left:1097px;top:598px" width="30" height="30" viewBox="1097 598 30 30"><circle cx="1110.2" cy="612" r="9.6" fill="none" stroke="#c4c7c5" stroke-width="1.4"/></svg>
<div class="t" style="left:1129px;top:604.5px;font-size:18.5px;color:#3c4043">Z to A</div>
<div class="a" style="left:713px;top:662px;width:621px;height:1.3px;background:#e3e3e3"></div>
<div class="a" style="left:713px;top:687px;width:294px;height:48px;border:1.3px solid #dadce0;border-radius:4px"></div>
<div class="t" style="left:746px;top:701px;font-size:19px;font-weight:bold;letter-spacing:0.18px;color:#3a7d42">Add another sort column</div>
<div class="a" style="left:1083px;top:767px;width:130px;height:48.5px;border:1.3px solid #dadce0;border-radius:4px"></div>
<div class="t" style="left:1116px;top:782px;font-size:19.5px;font-weight:bold;color:#3a7d42">Cancel</div>
<div class="a" style="left:1229px;top:767px;width:106px;height:48.5px;border-radius:4px;background:#3a7d42"></div>
<div class="t" style="left:1262px;top:781px;font-size:19.5px;font-weight:bold;color:#fff">Sort</div>
<div class="a" style="left:2047px;top:0;width:1px;height:1280px;background:#e6e6e6"></div>
<div class="a" style="left:0;top:1279px;width:2048px;height:1px;background:#e6e6e6"></div>
</body></html>
